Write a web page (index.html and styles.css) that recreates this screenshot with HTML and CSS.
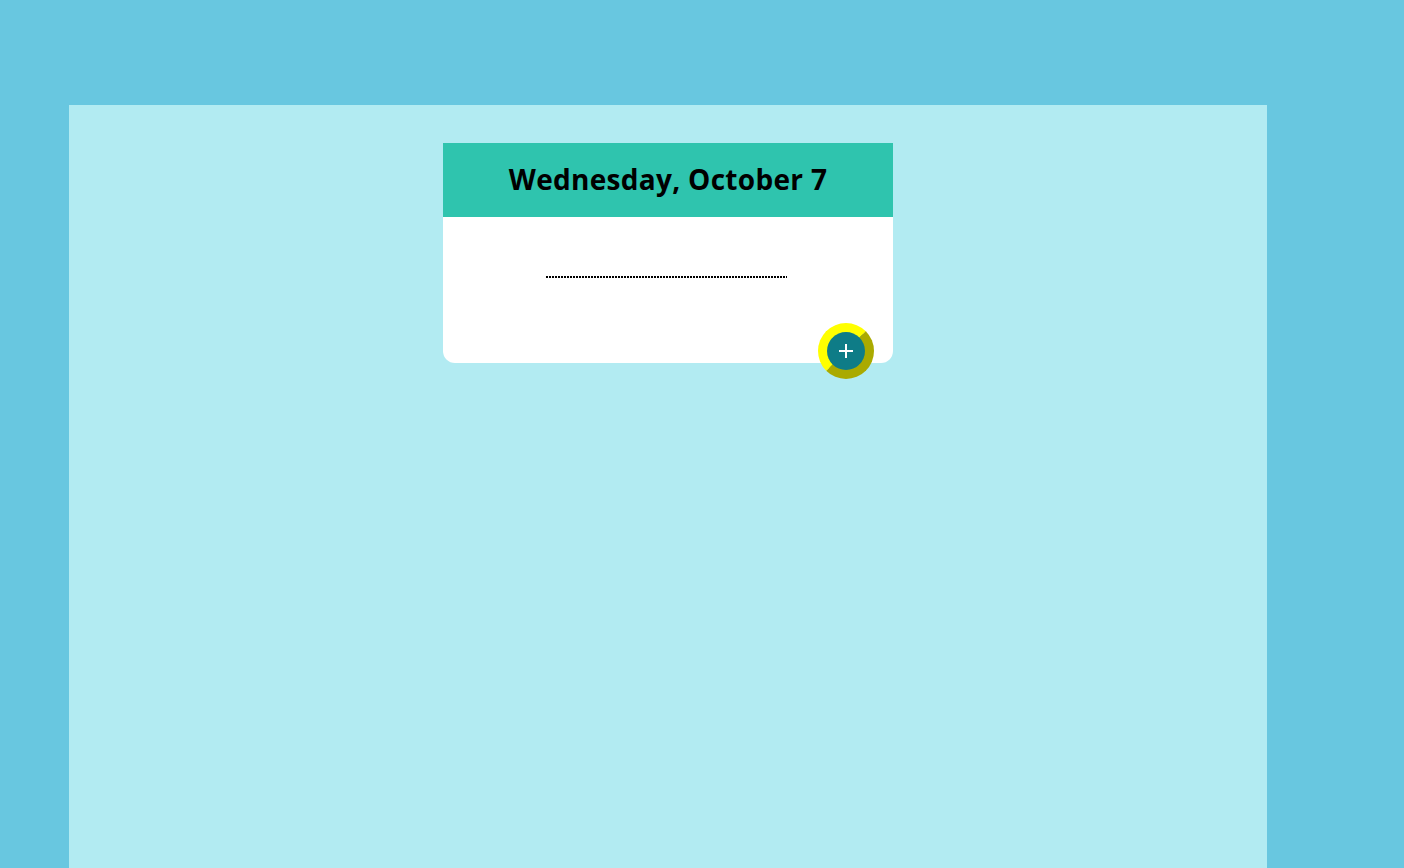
FILE: index.html
```html
<!DOCTYPE html>
<html>
<head>
<meta charset="utf-8">
<link rel="stylesheet" href="styles.css">
</head>
<body>
<div class="page">
  <main class="panel">
    <section class="card">
      <header class="card-header">
        <h1 class="card-title">Wednesday, October 7</h1>
      </header>
      <div class="card-body">
        <div class="entry-line"></div>
      </div>
      <button class="fab" type="button" aria-label="Add">
        <svg class="fab-icon" width="16" height="16" viewBox="0 0 16 16">
          <path d="M8 1V15M1 8H15" stroke="#ffffff" stroke-width="2" fill="none"/>
        </svg>
      </button>
    </section>
  </main>
</div>
</body>
</html>
```

FILE: styles.css
```css
html, body {
  margin: 0;
  padding: 0;
  height: 100%;
}
body {
  background: #68c7e0;
  font-family: "Open Sans", "DejaVu Sans", sans-serif;
  overflow: hidden;
}
.page {
  padding: 105px 137px 0 69px;
  height: 100%;
  box-sizing: border-box;
}
.panel {
  background: #b2ebf2;
  height: 100%;
  display: flex;
  flex-direction: column;
  align-items: center;
  padding-top: 38px;
  box-sizing: border-box;
}
.card {
  position: relative;
  width: 450px;
  background: #ffffff;
  border-radius: 0 0 12px 12px;
}
.card-header {
  background: #2fc4ae;
  height: 74px;
  display: flex;
  align-items: center;
  justify-content: center;
}
.card-title {
  margin: 0 0 2px 0;
  font-size: 28px;
  font-weight: 700;
  color: #000000;
  letter-spacing: 0.3px;
}
.card-body {
  height: 146px;
  display: flex;
  justify-content: center;
  padding-top: 59px;
  box-sizing: border-box;
}
.entry-line {
  width: 241px;
  height: 2px;
  background: repeating-linear-gradient(to right, #000000 0, #000000 2px, transparent 2px, transparent 3px);
  margin-right: 3px;
}
.fab {
  position: absolute;
  right: 19px;
  bottom: -16px;
  width: 56px;
  height: 56px;
  padding: 0;
  border-radius: 50%;
  border: 9px solid;
  border-color: #ffff00 #aaaa00 #aaaa00 #ffff00;
  background: #0e7c87;
  display: flex;
  align-items: center;
  justify-content: center;
  box-sizing: border-box;
  cursor: pointer;
}
.fab-icon {
  display: block;
}
```
